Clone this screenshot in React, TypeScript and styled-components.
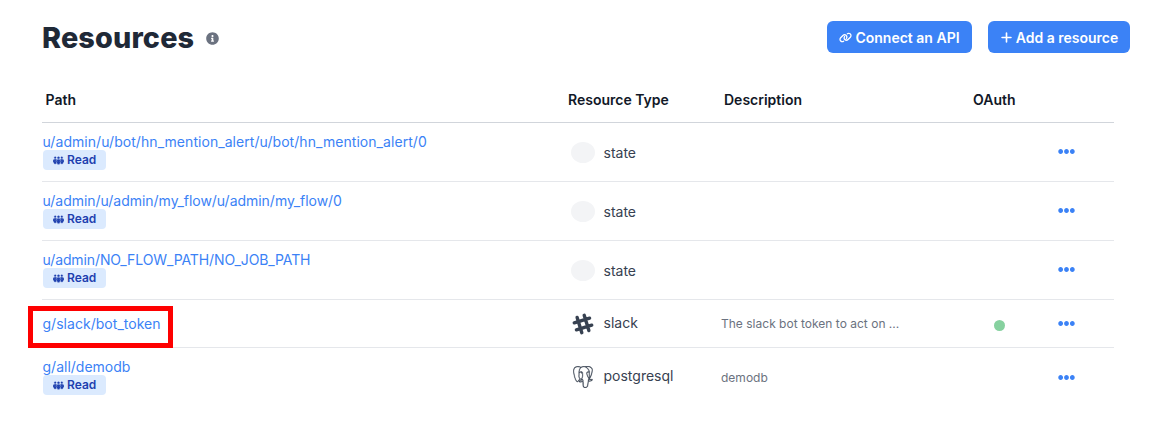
import React from "react";
import styled, { createGlobalStyle } from "styled-components";
import { FaInfoCircle, FaEllipsisH } from "react-icons/fa";
import { FaLink, FaPlus, FaPeopleGroup } from "react-icons/fa6";
import { SiPostgresql } from "react-icons/si";

const GlobalStyle = createGlobalStyle`
  *, *::before, *::after { box-sizing: border-box; }
  body {
    margin: 0;
    background: #fff;
    color: #374151;
    font-family: Inter, "Liberation Sans", sans-serif;
    font-size: 14px;
    line-height: 20px;
  }
`;

const Page = styled.main`
  padding: 17px 45px 0 42px;
`;

const PageHeader = styled.header`
  display: flex;
  align-items: center;
  justify-content: space-between;
  height: 40px;
`;

const TitleGroup = styled.div`
  display: flex;
  align-items: center;
  gap: 11.5px;
  padding-top: 2px;
  color: #6b7280;
`;

const Title = styled.h1`
  margin: 0;
  color: #1f2937;
  font-size: 28.8px;
  font-weight: 800;
  letter-spacing: 0.15px;
  line-height: 40px;
`;

const Actions = styled.div`
  display: flex;
  gap: 16px;
`;

const Button = styled.button<{ $width: number }>`
  display: flex;
  align-items: center;
  justify-content: center;
  gap: 3px;
  width: ${(p) => p.$width}px;
  height: 32px;
  padding: 1px 0 0;
  border: 0;
  border-radius: 6px;
  background: #3b82f6;
  color: #fff;
  font: 600 14px/21px Inter, "Liberation Sans", sans-serif;
  white-space: nowrap;
`;

const Table = styled.div`
  width: 1072px;
  margin-top: 21px;
`;

const Row = styled.div<{ $height: number }>`
  display: grid;
  grid-template-columns: 526px 153px 252px 84px 57px;
  height: ${(p) => p.$height}px;
  border-bottom: 1px solid #e5e7eb;

  &:last-child { border-bottom: 0; }
`;

const HeadRow = styled(Row)`
  border-bottom-color: #d1d5db;
  color: #111827;
  font-weight: 600;
`;

const HeadCell = styled.div<{ $inset?: number }>`
  padding: 12px 0 0 ${(p) => p.$inset ?? 0}px;
`;

const PathCell = styled.div<{ $top: number }>`
  display: flex;
  flex-direction: column;
  align-items: flex-start;
  padding: ${(p) => p.$top}px 0 0 0.5px;
`;

const PathLink = styled.a<{ $tracking?: number }>`
  color: #3b82f6;
  letter-spacing: ${(p) => p.$tracking ?? 0}px;
  line-height: 18px;
`;

const Badge = styled.span`
  display: flex;
  align-items: center;
  gap: 3px;
  height: 20px;
  margin: -1px 0 0 0.5px;
  padding: 0 10px;
  border-radius: 4px;
  background: #dbeafe;
  color: #1e40af;
  font-size: 12px;
  font-weight: 600;

  svg {
    stroke: currentColor;
    stroke-width: 16;
  }
`;

const TypeCell = styled.div<{ $top: number }>`
  display: flex;
  align-items: center;
  gap: 9px;
  height: 24px;
  margin-top: ${(p) => p.$top}px;
  padding-left: 2.5px;
`;

const Placeholder = styled.span`
  width: 24px;
  height: 21px;
  margin-bottom: 1px;
  border-radius: 50%;
  background: #f3f4f6;
`;

const IconSlot = styled.span`
  display: flex;
  justify-content: center;
  width: 24px;
  padding-top: 1px;
`;

const ElephantIcon = styled(SiPostgresql)`
  width: 20px;
  height: 22px;
  stroke: currentColor;
  stroke-width: 0.35;
`;

const Description = styled.div<{ $top: number }>`
  padding: ${(p) => p.$top}px 0 0 0;
  color: #6b7280;
  font-size: 12px;
  letter-spacing: 0.01px;
`;

const StatusCell = styled.div<{ $top: number }>`
  padding: ${(p) => p.$top}px 0 0 21px;
`;

const StatusDot = styled.span`
  display: block;
  width: 11px;
  height: 11px;
  border-radius: 50%;
  background: #86d19f;
`;

const MenuCell = styled.div<{ $top: number }>`
  padding: ${(p) => p.$top}px 0 0 1px;
  color: #3b82f6;

  svg { display: block; }
`;

const Highlight = styled.div`
  position: absolute;
  left: 28px;
  top: 306px;
  width: 145px;
  height: 42px;
  border: 5px solid #fe0000;
`;

type Resource = {
  path: string;
  tracking?: number;
  type: "state" | "slack" | "postgresql";
  height: number;
  readOnly?: boolean;
  description?: string;
  oauth?: boolean;
  menuTop: number;
};

const resources: Resource[] = [
  { path: "u/admin/u/bot/hn_mention_alert/u/bot/hn_mention_alert/0", tracking: 0.055, type: "state", height: 59, readOnly: true, menuTop: 20 },
  { path: "u/admin/u/admin/my_flow/u/admin/my_flow/0", tracking: -0.025, type: "state", height: 59, readOnly: true, menuTop: 20 },
  { path: "u/admin/NO_FLOW_PATH/NO_JOB_PATH", tracking: -0.11, type: "state", height: 59, readOnly: true, menuTop: 20 },
  { path: "g/slack/bot_token", tracking: 0.03, type: "slack", height: 48, description: "The slack bot token to act on ...", oauth: true, menuTop: 15 },
  { path: "g/all/demodb", type: "postgresql", height: 59, readOnly: true, description: "demodb", menuTop: 21 },
];

const typeTop = { state: 18, slack: 11, postgresql: 16 };

function SlackIcon() {
  return (
    <svg width="24" height="24" viewBox="0 0 24 24" fill="none" stroke="currentColor" strokeWidth="3.4" strokeLinecap="round">
      <path transform="rotate(-17 12 12)" d="M8.3 4V20M15.7 4V20M4 8.3H20M4 15.7H20" />
    </svg>
  );
}

function TypeIcon({ type }: { type: Resource["type"] }) {
  if (type === "slack") return <IconSlot><SlackIcon /></IconSlot>;
  if (type === "postgresql") return <IconSlot><ElephantIcon preserveAspectRatio="none" /></IconSlot>;
  return <Placeholder />;
}

export default function App() {
  return (
    <>
      <GlobalStyle />
      <Page>
        <PageHeader>
          <TitleGroup>
            <Title>Resources</Title>
            <FaInfoCircle size={13} />
          </TitleGroup>
          <Actions>
            <Button $width={145}><FaLink size={13} />Connect an API</Button>
            <Button $width={142}><FaPlus size={13} />Add a resource</Button>
          </Actions>
        </PageHeader>
        <Table>
          <HeadRow $height={45}>
            <HeadCell $inset={3.5}>Path</HeadCell>
            <HeadCell>Resource Type</HeadCell>
            <HeadCell $inset={3}>Description</HeadCell>
            <HeadCell>OAuth</HeadCell>
            <HeadCell />
          </HeadRow>
          {resources.map((r) => (
            <Row key={r.path} $height={r.height}>
              <PathCell $top={r.readOnly ? 10 : 15}>
                <PathLink $tracking={r.tracking}>{r.path}</PathLink>
                {r.readOnly && <Badge><FaPeopleGroup size={11} />Read</Badge>}
              </PathCell>
              <TypeCell $top={typeTop[r.type]}>
                <TypeIcon type={r.type} />
                {r.type}
              </TypeCell>
              <Description $top={r.type === "slack" ? 14 : 20}>{r.description}</Description>
              <StatusCell $top={20}>{r.oauth && <StatusDot />}</StatusCell>
              <MenuCell $top={r.menuTop}><FaEllipsisH size={17} /></MenuCell>
            </Row>
          ))}
        </Table>
      </Page>
      <Highlight />
    </>
  );
}
